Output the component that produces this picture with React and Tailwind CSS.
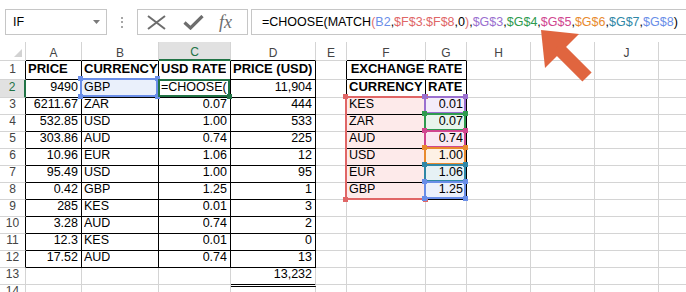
import React from "react";

const COL_LETTERS = ["A", "B", "C", "D", "E", "F", "G", "H", "I", "J", ""];

const TABLE = [
  ["6211.67", "ZAR", "0.07", "444"],
  ["532.85", "USD", "1.00", "533"],
  ["303.86", "AUD", "0.74", "225"],
  ["10.96", "EUR", "1.06", "12"],
  ["95.49", "USD", "1.00", "95"],
  ["0.42", "GBP", "1.25", "1"],
  ["285", "KES", "0.01", "3"],
  ["3.28", "AUD", "0.74", "2"],
  ["12.3", "KES", "0.01", "0"],
  ["17.52", "AUD", "0.74", "13"],
];

const RATES = [
  ["KES", "0.01"],
  ["ZAR", "0.07"],
  ["AUD", "0.74"],
  ["USD", "1.00"],
  ["EUR", "1.06"],
  ["GBP", "1.25"],
];

const RATE_STYLES = [
  { line: "shadow-[inset_0_0_0_2px_#9a6fcf]", sq: "bg-[#9a6fcf]", fill: "bg-[#f3ecfa]" },
  { line: "shadow-[inset_0_0_0_2px_#2e9a4e]", sq: "bg-[#2e9a4e]", fill: "bg-[#e8f4ec]" },
  { line: "shadow-[inset_0_0_0_2px_#d0468f]", sq: "bg-[#d0468f]", fill: "bg-[#fae8f1]" },
  { line: "shadow-[inset_0_0_0_2px_#e88a2e]", sq: "bg-[#e88a2e]", fill: "bg-[#fdf1e5]" },
  { line: "shadow-[inset_0_0_0_2px_#2f87a6]", sq: "bg-[#2f87a6]", fill: "bg-[#e6f1f5]" },
  { line: "shadow-[inset_0_0_0_2px_#6a8ee8]", sq: "bg-[#6a8ee8]", fill: "bg-[#ebf0fc]" },
];

function inRegion(r, c) {
  return (c >= 1 && c <= 4 && r >= 1 && r <= 12) || ((c === 6 || c === 7) && r >= 1 && r <= 8);
}

function content(r, c) {
  if (r === 1) {
    if (c === 1) return { t: "PRICE", b: true };
    if (c === 2) return { t: "CURRENCY", b: true };
    if (c === 3) return { t: "USD RATE", b: true };
    if (c === 4) return { t: "PRICE (USD)", b: true };
    if (c === 6) return { t: "EXCHANGE RATE", b: true, a: "c" };
  }
  if (r === 2) {
    if (c === 1) return { t: "9490", a: "r" };
    if (c === 2) return { t: "GBP" };
    if (c === 3) return { t: "=CHOOSE(" };
    if (c === 4) return { t: "11,904", a: "r" };
    if (c === 6) return { t: "CURRENCY", b: true };
    if (c === 7) return { t: "RATE", b: true };
  }
  if (r >= 3 && r <= 12) {
    const row = TABLE[r - 3];
    if (c === 1) return { t: row[0], a: "r" };
    if (c === 2) return { t: row[1] };
    if (c === 3) return { t: row[2], a: "r" };
    if (c === 4) return { t: row[3], a: "r" };
  }
  if (r >= 3 && r <= 8) {
    const rr = RATES[r - 3];
    if (c === 6) return { t: rr[0] };
    if (c === 7) return { t: rr[1], a: "r" };
  }
  if (r === 13 && c === 4) return { t: "13,232", a: "r" };
  return null;
}

function Range({ box, line, sq }) {
  return (
    <div className={`pointer-events-none absolute z-10 ${box} ${line}`}>
      <div className={`absolute -left-[2px] -top-[2px] h-[5px] w-[5px] ${sq}`} />
      <div className={`absolute -right-[2px] -top-[2px] h-[5px] w-[5px] ${sq}`} />
      <div className={`absolute -bottom-[2px] -left-[2px] h-[5px] w-[5px] ${sq}`} />
      <div className={`absolute -bottom-[2px] -right-[2px] h-[5px] w-[5px] ${sq}`} />
    </div>
  );
}

function TopBar() {
  return (
    <div className="flex h-[42px] items-start pt-[9px]">
      <div className="ml-[5px] flex h-[26px] w-[102px] items-center border border-[#c6c6c6] pl-[7px] pr-[6px] text-[12.5px] text-black">
        <span className="flex-1">IF</span>
        <svg width="7" height="4" viewBox="0 0 7 4">
          <path d="M0 0H7L3.5 4Z" fill="#7a7a7a" />
        </svg>
      </div>
      <div className="flex h-[26px] w-[30px] flex-col items-center justify-center gap-[2.5px]">
        <div className="h-[2px] w-[2px] bg-[#a6a6a6]" />
        <div className="h-[2px] w-[2px] bg-[#a6a6a6]" />
        <div className="h-[2px] w-[2px] bg-[#a6a6a6]" />
      </div>
      <div className="flex h-[26px] w-[111px] items-center border border-[#c6c6c6]">
        <svg className="ml-[9px]" width="19" height="15" viewBox="0 0 19 15">
          <path d="M1 1L18 14M18 1L1 14" stroke="#6d6d6d" strokeWidth="2" fill="none" />
        </svg>
        <svg className="ml-[17px]" width="21" height="15" viewBox="0 0 21 15">
          <path d="M1.5 7.5L7.5 13L19.5 1" stroke="#6d6d6d" strokeWidth="3.2" fill="none" />
        </svg>
        <span className="ml-[15px] font-['Liberation_Serif',serif] text-[18px] italic leading-none text-[#6d6d6d]">
          fx
        </span>
      </div>
      <div className="-mr-[4px] ml-[3px] flex h-[26px] flex-1 items-center border border-[#c6c6c6] pl-[10px] text-[12.5px] whitespace-nowrap text-black">
        <span>=CHOOSE(MATCH</span>
        <span className="text-[#e07070]">(</span>
        <span className="text-[#6a8ee8]">B2</span>
        <span>,</span>
        <span className="text-[#e06666]">$F$3:$F$8</span>
        <span>,0</span>
        <span className="text-[#e07070]">)</span>
        <span>,</span>
        <span className="text-[#9a6fcf]">$G$3</span>
        <span>,</span>
        <span className="text-[#2e9a4e]">$G$4</span>
        <span>,</span>
        <span className="text-[#d0468f]">$G$5</span>
        <span>,</span>
        <span className="text-[#e88a2e]">$G$6</span>
        <span>,</span>
        <span className="text-[#2f87a6]">$G$7</span>
        <span>,</span>
        <span className="text-[#6a8ee8]">$G$8</span>
        <span>)</span>
      </div>
    </div>
  );
}

function Sheet() {
  const cells = [];
  for (let r = 0; r <= 14; r++) {
    for (let c = 0; c <= 11; c++) {
      const key = `${r}-${c}`;
      if (r === 0 && c === 0) {
        cells.push(
          <div key={key} className="relative border-r border-b border-r-[#d4d4d4] border-b-[#d4d4d4] bg-white">
            <svg className="absolute right-[3px] bottom-[3px]" width="8" height="8" viewBox="0 0 8 8">
              <path d="M8 0V8H0Z" fill="#d2d2d2" />
            </svg>
          </div>
        );
        continue;
      }
      if (r === 0) {
        const sel = c === 3;
        const bb = sel
          ? "border-b-2 border-b-[#217346]"
          : inRegion(1, c)
          ? "border-b border-b-black"
          : "border-b border-b-[#d4d4d4]";
        cells.push(
          <div
            key={key}
            className={`flex items-end justify-center border-r border-r-[#d4d4d4] text-[12px] leading-[14px] ${bb} ${
              sel ? "bg-[#e1e1e1] text-[#217346]" : "bg-white text-[#444]"
            }`}
          >
            {COL_LETTERS[c - 1]}
          </div>
        );
        continue;
      }
      if (c === 0) {
        const sel = r === 2;
        const rb = sel
          ? "border-r-2 border-r-[#217346]"
          : inRegion(r, 1)
          ? "border-r border-r-black"
          : "border-r border-r-[#d4d4d4]";
        cells.push(
          <div
            key={key}
            className={`flex items-end justify-center border-b border-b-[#d4d4d4] pb-[3px] text-[12px] leading-[14px] ${rb} ${
              sel ? "bg-[#e1e1e1] text-[#217346]" : "bg-white text-[#444]"
            }`}
          >
            {r}
          </div>
        );
        continue;
      }
      if (r === 1 && c === 7) continue; // merged into F1

      const span = r === 1 && c === 6;
      const lastC = span ? 7 : c;
      const rbBlack = inRegion(r, lastC) || inRegion(r, lastC + 1);
      const bbBlack = inRegion(r, c) || inRegion(r + 1, c);
      const rb = rbBlack ? "border-r-black" : "border-r-[#d4d4d4]";
      let bb = bbBlack ? "border-b border-b-black" : "border-b border-b-[#d4d4d4]";
      let extra = "";
      if (r === 13 && c === 4) {
        bb = "border-b-[3px] border-double border-b-black";
        extra = "-mb-[2px] z-[5]";
      }
      let bg = "bg-white";
      if (r === 2 && c === 2) bg = "bg-[#eaf0fb]";
      if (c === 6 && r >= 3 && r <= 8) bg = "bg-[#fdeaea]";
      if (c === 7 && r >= 3 && r <= 8) bg = RATE_STYLES[r - 3].fill;

      const ct = content(r, c);
      const a = ct ? ct.a : null;
      const just = a === "r" ? "justify-end pr-[3px]" : a === "c" ? "justify-center" : "justify-start pl-[2px]";
      const txt = ct ? (ct.b ? "font-bold text-[13px]" : "text-[12.5px]") : "";

      let overlay = null;
      if (r === 2 && c === 2) {
        overlay = (
          <Range
            box="-left-[2px] -top-[2px] right-0 bottom-0"
            line="shadow-[inset_0_0_0_2px_#6a8ee8]"
            sq="bg-[#6a8ee8]"
          />
        );
      } else if (r === 2 && c === 3) {
        overlay = (
          <div className="pointer-events-none absolute -left-px -top-px right-0 bottom-0 z-20 shadow-[inset_0_0_0_2px_#217346]">
            <div className="absolute -right-[2px] -bottom-[2px] h-[5px] w-[5px] bg-[#217346]" />
          </div>
        );
      } else if (r === 3 && c === 6) {
        overlay = (
          <Range
            box="-left-[2px] -top-[2px] w-[81px] h-[104px]"
            line="shadow-[inset_0_0_0_2px_#e06666]"
            sq="bg-[#e06666]"
          />
        );
      } else if (c === 7 && r >= 3 && r <= 8) {
        const s = RATE_STYLES[r - 3];
        overlay = <Range box="-left-[2px] -top-[2px] right-0 bottom-0" line={s.line} sq={s.sq} />;
      }

      cells.push(
        <div
          key={key}
          className={`relative flex min-w-0 items-end border-r pb-[3px] text-black ${rb} ${bb} ${bg} ${just} ${extra} ${
            span ? "col-span-2" : ""
          }`}
        >
          {ct ? <span className={`overflow-hidden whitespace-nowrap leading-[14px] ${txt}`}>{ct.t}</span> : null}
          {overlay}
        </div>
      );
    }
  }
  return (
    <div className="grid grid-cols-[26px_56px_77px_72px_85px_31px_79px_41px_64px_64px_64px_64px] grid-rows-[19px_19px_18px_repeat(12,17px)]">
      {cells}
    </div>
  );
}

function Arrow() {
  return (
    <svg className="pointer-events-none absolute left-[530px] top-[25px] z-30" width="70" height="60" viewBox="0 0 70 60">
      <path d="M11 5L49 9L15 43Z" fill="#e0653f" />
      <path d="M27 22L57 52" stroke="#e0653f" strokeWidth="13" fill="none" />
    </svg>
  );
}

export default function App() {
  return (
    <div className="relative h-[292px] w-[686px] overflow-hidden bg-white font-['Liberation_Sans',Arial,sans-serif]">
      <TopBar />
      <Sheet />
      <Arrow />
    </div>
  );
}
